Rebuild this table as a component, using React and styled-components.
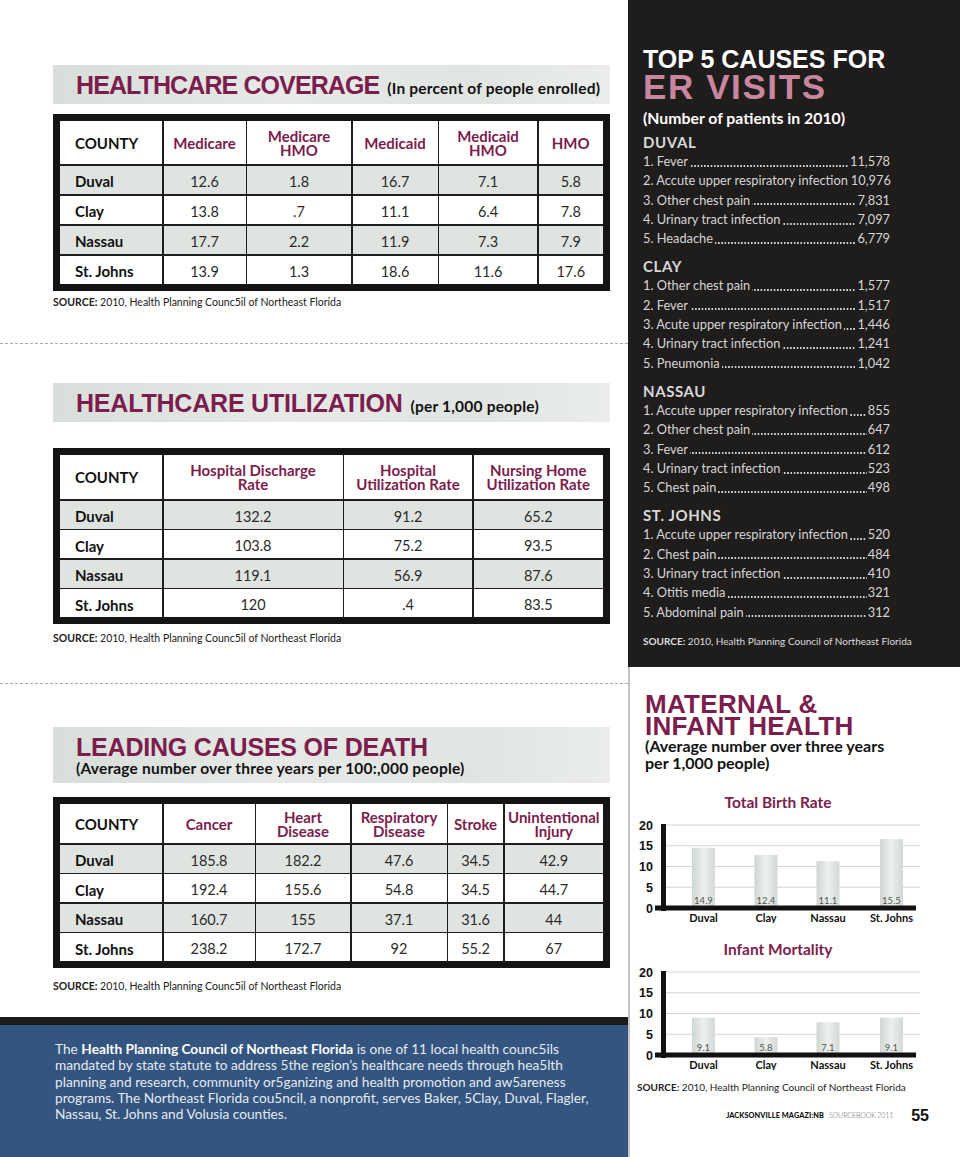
import React from 'react';
import styled, { createGlobalStyle } from 'styled-components';

const MAROON = '#7b1d4d';
const SANS = '"Lato", "Noto Sans", sans-serif';
const HEAD = '"Liberation Sans", Arial, sans-serif';

const GlobalStyle = createGlobalStyle`
  html, body { margin: 0; padding: 0; background: #fff; }
  body { font-family: ${SANS}; }
`;

const Page = styled.div`
  width: 960px;
  height: 1157px;
  display: grid;
  grid-template-columns: 628px 332px;
  overflow: hidden;
`;

/* ---------- left column ---------- */

const LeftCol = styled.div`
  display: flex;
  flex-direction: column;
  background: #fff;
`;

const Block = styled.div`
  padding: 0 18px 0 53px;
  margin-top: ${p => p.$top}px;
`;

const HeadBar = styled.div`
  height: ${p => p.$h}px;
  box-sizing: border-box;
  display: flex;
  flex-direction: ${p => (p.$stacked ? 'column' : 'row')};
  align-items: ${p => (p.$stacked ? 'flex-start' : 'baseline')};
  padding: ${p => (p.$stacked ? '8px 0 0 23px' : '2px 0 0 23px')};
  background: linear-gradient(90deg, #d8deda 0%, #e6e9e6 40%, #e1e5e2 75%, #eaedea 100%);
`;

const HeadTitle = styled.span`
  font-family: ${HEAD};
  font-weight: 700;
  font-size: 25px;
  letter-spacing: ${p => p.$ls ?? -0.2}px;
  color: ${MAROON};
  line-height: ${p => (p.$stacked ? '24px' : '37px')};
`;

const HeadSub = styled.span`
  font-weight: 700;
  font-size: 15.5px;
  letter-spacing: 0.2px;
  line-height: 18px;
  color: #111;
  margin-left: ${p => (p.$stacked ? 0 : 8)}px;
`;

const Frame = styled.div`
  margin-top: ${p => p.$top}px;
  border: 7px solid #141414;
  background: #1e1e1e;
  display: grid;
  grid-template-columns: ${p => p.$cols};
  grid-template-rows: ${p => p.$head}px repeat(4, ${p => p.$row}px);
  gap: 1.5px;
`;

const HeadCell = styled.div`
  background: #fff;
  display: flex;
  align-items: center;
  justify-content: ${p => (p.$first ? 'flex-start' : 'center')};
  padding-left: ${p => (p.$first ? 15 : 0)}px;
  text-align: center;
  font-weight: 700;
  font-size: 15px;
  line-height: 14px;
  color: ${p => (p.$first ? '#111' : MAROON)};
`;

const Cell = styled.div`
  background: ${p => (p.$shade ? '#dfe4e1' : '#fff')};
  display: flex;
  align-items: center;
  justify-content: ${p => (p.$first ? 'flex-start' : 'center')};
  padding: 3px 0 0 ${p => (p.$first ? 15 : 0)}px;
  font-size: ${p => (p.$first ? 15 : 14.5)}px;
  font-weight: ${p => (p.$first ? 700 : 400)};
  color: ${p => (p.$first ? '#111' : '#2b2b2b')};
`;

const Source = styled.div`
  margin-top: ${p => p.$top}px;
  font-size: 10.5px;
  line-height: 12px;
  color: #222;
  b { font-weight: 700; }
`;

const Dashed = styled.div`
  margin-top: ${p => p.$top}px;
  border-top: 1px dashed #a9a9a9;
`;

const InfoPanel = styled.div`
  flex: 1;
  margin-top: 25px;
  border-top: 8px solid #1b1b1b;
  background: #33557f;
  padding: 16px 0 0 55px;
  font-size: 13.7px;
  line-height: 16.3px;
  color: #e4eaf1;
  white-space: nowrap;
  b { color: #fff; font-weight: 700; }
`;

/* ---------- right column ---------- */

const RightCol = styled.div`
  display: flex;
  flex-direction: column;
`;

const ErPanel = styled.div`
  height: 667px;
  box-sizing: border-box;
  background: #1f1c1c;
  padding: 46px 0 0 15px;
  color: #dadada;
`;

const ErTop = styled.div`
  font-family: ${HEAD};
  font-weight: 700;
  font-size: 25px;
  line-height: 26px;
  color: #fff;
`;

const ErBig = styled.div`
  font-family: ${HEAD};
  font-weight: 700;
  font-size: 35px;
  line-height: 30px;
  letter-spacing: 1.6px;
  color: #c8869f;
`;

const ErSub = styled.div`
  margin-top: 7px;
  font-weight: 700;
  font-size: 15.8px;
  line-height: 18px;
  color: #fff;
`;

const GroupHead = styled.div`
  margin-top: ${p => p.$top}px;
  font-weight: 700;
  font-size: 15px;
  line-height: 20px;
  letter-spacing: 0.6px;
  color: #d8d8d8;
`;

const List = styled.div`
  width: 247px;
`;

const Row = styled.div`
  display: flex;
  white-space: nowrap;
  font-size: 12.8px;
  line-height: 19.3px;
  color: #d6d6d6;
`;

const Leader = styled.span`
  flex: 1;
  min-width: 0;
  align-self: flex-end;
  height: 2px;
  margin: 0 1px 4.6px 2px;
  background-image: radial-gradient(circle at 1px 1px, #cfcfcf 0.8px, transparent 1.1px);
  background-size: 3.3px 2px;
  background-repeat: repeat-x;
  background-position: right bottom;
`;

const ErSource = styled.div`
  margin-top: 12px;
  font-size: 10px;
  line-height: 14px;
  color: #dedede;
  b { font-weight: 700; }
`;

const Lower = styled.div`
  flex: 1;
  border-left: 2px solid #c4c4c4;
  background: #fff;
  display: flex;
  flex-direction: column;
`;

const MatTitle = styled.div`
  margin-top: 26px;
  padding-left: 15px;
  font-family: ${HEAD};
  font-weight: 700;
  font-size: 26px;
  line-height: 22px;
  letter-spacing: 0.3px;
  color: ${MAROON};
`;

const MatSub = styled.div`
  padding-left: 15px;
  font-weight: 700;
  font-size: 16px;
  line-height: 17px;
  color: #111;
`;

const ChartTitle = styled.div`
  margin-top: ${p => p.$top}px;
  width: 296px;
  text-align: center;
  font-weight: 700;
  font-size: 15.5px;
  line-height: 18px;
  color: ${MAROON};
`;

const ChartSvg = styled.svg`
  display: block;
  width: 330px;
  height: 112px;
`;

const LowerSource = styled.div`
  margin-top: 10px;
  padding-left: 7px;
  font-size: 10px;
  line-height: 14px;
  color: #222;
  b { font-weight: 700; }
`;

const Footer = styled.div`
  margin-top: 14px;
  display: flex;
  align-items: center;
  justify-content: flex-end;
  padding-right: 31px;
  line-height: 16px;
`;

const Mag = styled.span`
  font-size: 7.3px;
  font-weight: 900;
  letter-spacing: 0.1px;
  color: #111;
`;

const Book = styled.span`
  margin-left: 5px;
  font-size: 7.2px;
  font-weight: 300;
  letter-spacing: -0.2px;
  color: #666;
`;

const PageNum = styled.span`
  margin-left: 18px;
  font-family: ${HEAD};
  font-weight: 700;
  font-size: 16px;
  color: #111;
`;

/* ---------- data ---------- */

const coverage = {
  cols: '102px 82px 104px 85px 98px 1fr',
  head: ['COUNTY', 'Medicare', ['Medicare', 'HMO'], 'Medicaid', ['Medicaid', 'HMO'], 'HMO'],
  rows: [
    ['Duval', '12.6', '1.8', '16.7', '7.1', '5.8'],
    ['Clay', '13.8', '.7', '11.1', '6.4', '7.8'],
    ['Nassau', '17.7', '2.2', '11.9', '7.3', '7.9'],
    ['St. Johns', '13.9', '1.3', '18.6', '11.6', '17.6'],
  ],
};

const utilization = {
  cols: '102px 179px 128px 1fr',
  head: ['COUNTY', ['Hospital Discharge', 'Rate'], ['Hospital', 'Utilization Rate'], ['Nursing Home', 'Utilization Rate']],
  rows: [
    ['Duval', '132.2', '91.2', '65.2'],
    ['Clay', '103.8', '75.2', '93.5'],
    ['Nassau', '119.1', '56.9', '87.6'],
    ['St. Johns', '120', '.4', '83.5'],
  ],
};

const deaths = {
  cols: '102px 91px 94px 95px 55px 1fr',
  head: ['COUNTY', 'Cancer', ['Heart', 'Disease'], ['Respiratory', 'Disease'], 'Stroke', ['Unintentional', 'Injury']],
  rows: [
    ['Duval', '185.8', '182.2', '47.6', '34.5', '42.9'],
    ['Clay', '192.4', '155.6', '54.8', '34.5', '44.7'],
    ['Nassau', '160.7', '155', '37.1', '31.6', '44'],
    ['St. Johns', '238.2', '172.7', '92', '55.2', '67'],
  ],
};

const erGroups = [
  { name: 'DUVAL', top: 5, items: [
    ['1. Fever', '11,578'],
    ['2. Accute upper respiratory infection', '10,976'],
    ['3. Other chest pain', '7,831'],
    ['4. Urinary tract infection', '7,097'],
    ['5. Headache', '6,779'],
  ] },
  { name: 'CLAY', top: 8, items: [
    ['1. Other chest pain', '1,577'],
    ['2. Fever', '1,517'],
    ['3. Acute upper respiratory infection', '1,446'],
    ['4. Urinary tract infection', '1,241'],
    ['5. Pneumonia', '1,042'],
  ] },
  { name: 'NASSAU', top: 8, items: [
    ['1. Accute upper respiratory infection', '855'],
    ['2. Other chest pain', '647'],
    ['3. Fever', '612'],
    ['4. Urinary tract infection', '523'],
    ['5. Chest pain', '498'],
  ] },
  { name: 'ST. JOHNS', top: 8, items: [
    ['1. Accute upper respiratory infection', '520'],
    ['2. Chest pain', '484'],
    ['3. Urinary tract infection', '410'],
    ['4. Otitis media', '321'],
    ['5. Abdominal pain', '312'],
  ] },
];

const birth = [
  { c: 'Duval', v: '14.9', h: 14.5 },
  { c: 'Clay', v: '12.4', h: 12.8 },
  { c: 'Nassau', v: '11.1', h: 11.3 },
  { c: 'St. Johns', v: '15.5', h: 16.6 },
];

const infant = [
  { c: 'Duval', v: '9.1', h: 9.0 },
  { c: 'Clay', v: '5.8', h: 4.3 },
  { c: 'Nassau', v: '7.1', h: 7.9 },
  { c: 'St. Johns', v: '9.1', h: 9.0 },
];

/* ---------- pieces ---------- */

function DataTable({ spec, top, head, row }) {
  return (
    <Frame $cols={spec.cols} $top={top} $head={head} $row={row}>
      {spec.head.map((h, i) => (
        <HeadCell key={'h' + i} $first={i === 0}>
          {Array.isArray(h) ? <span>{h[0]}<br />{h[1]}</span> : h}
        </HeadCell>
      ))}
      {spec.rows.map((r, ri) =>
        r.map((v, ci) => (
          <Cell key={ri + '-' + ci} $first={ci === 0} $shade={ri % 2 === 0}>{v}</Cell>
        ))
      )}
    </Frame>
  );
}

function BarChart({ id, data }) {
  const zero = 97;
  const unit = 4.15;
  const xs = [73.5, 136, 198, 261.5];
  return (
    <ChartSvg viewBox="0 0 330 112">
      <defs>
        <linearGradient id={id} x1="0" x2="1" y1="0" y2="0">
          <stop offset="0" stopColor="#cfd6d2" />
          <stop offset="0.5" stopColor="#eef1ee" />
          <stop offset="1" stopColor="#d3d9d5" />
        </linearGradient>
      </defs>
      {[5, 10, 15, 20].map(t => (
        <line key={t} x1="36" x2="290" y1={zero - t * unit} y2={zero - t * unit} stroke="#d4d4d4" strokeWidth="1" />
      ))}
      {[0, 5, 10, 15, 20].map(t => (
        <text key={t} x="23" y={zero - t * unit + 4.5} textAnchor="end" fontFamily={HEAD} fontWeight="700" fontSize="12.5" fill="#111">{t}</text>
      ))}
      {data.map((d, i) => (
        <g key={d.c}>
          <rect x={xs[i] - 11.5} y={zero - d.h * unit} width="23" height={d.h * unit} fill={`url(#${id})`} />
          <text x={xs[i]} y={zero - 4.5} textAnchor="middle" fontFamily={SANS} fontSize="9.5" fill="#555">{d.v}</text>
          <text x={xs[i]} y={zero + 14} textAnchor="middle" fontFamily={SANS} fontWeight="700" fontSize="11" fill="#111">{d.c}</text>
        </g>
      ))}
      <rect x="31" y="13" width="5" height={zero - 10} fill="#111" />
      <rect x="25" y={zero - 2.5} width="261" height="5" fill="#111" />
    </ChartSvg>
  );
}

export default function App() {
  return (
    <>
      <GlobalStyle />
      <Page>
        <LeftCol>
          <Block $top={65}>
            <HeadBar $h={39}>
              <HeadTitle $ls={-0.9}>HEALTHCARE COVERAGE</HeadTitle>
              <HeadSub>(In percent of people enrolled)</HeadSub>
            </HeadBar>
            <DataTable spec={coverage} top={10} head={43} row={28.5} />
            <Source $top={5}><b>SOURCE:</b> 2010, Health Planning Counc5il of Northeast Florida</Source>
          </Block>
          <Dashed $top={35} />

          <Block $top={39}>
            <HeadBar $h={39}>
              <HeadTitle>HEALTHCARE UTILIZATION</HeadTitle>
              <HeadSub>(per 1,000 people)</HeadSub>
            </HeadBar>
            <DataTable spec={utilization} top={26} head={44} row={28} />
            <Source $top={8}><b>SOURCE:</b> 2010, Health Planning Counc5il of Northeast Florida</Source>
          </Block>
          <Dashed $top={39} />

          <Block $top={43}>
            <HeadBar $h={56} $stacked>
              <HeadTitle $stacked>LEADING CAUSES OF DEATH</HeadTitle>
              <HeadSub $stacked>(Average number over three years per 100:,000 people)</HeadSub>
            </HeadBar>
            <DataTable spec={deaths} top={14} head={39} row={28} />
            <Source $top={12}><b>SOURCE:</b> 2010, Health Planning Counc5il of Northeast Florida</Source>
          </Block>

          <InfoPanel>
            The <b>Health Planning Council of Northeast Florida</b> is one of 11 local health counc5ils<br />
            mandated by state statute to address 5the region’s healthcare needs through hea5lth<br />
            planning and research, community or5ganizing and health promotion and aw5areness<br />
            programs. The Northeast Florida cou5ncil, a nonprofit, serves Baker, 5Clay, Duval, Flagler,<br />
            Nassau, St. Johns and Volusia counties.
          </InfoPanel>
        </LeftCol>

        <RightCol>
          <ErPanel>
            <ErTop>TOP 5 CAUSES FOR</ErTop>
            <ErBig>ER VISITS</ErBig>
            <ErSub>(Number of patients in 2010)</ErSub>
            {erGroups.map(g => (
              <div key={g.name}>
                <GroupHead $top={g.top}>{g.name}</GroupHead>
                <List>
                  {g.items.map(([label, num]) => (
                    <Row key={label}>
                      <span>{label}</span>
                      <Leader />
                      <span>{num}</span>
                    </Row>
                  ))}
                </List>
              </div>
            ))}
            <ErSource><b>SOURCE:</b> 2010, Health Planning Council of Northeast Florida</ErSource>
          </ErPanel>

          <Lower>
            <MatTitle>MATERNAL &amp;<br />INFANT HEALTH</MatTitle>
            <MatSub>(Average number over three years<br />per 1,000 people)</MatSub>
            <ChartTitle $top={22}>Total Birth Rate</ChartTitle>
            <BarChart id="birthGrad" data={birth} />
            <ChartTitle $top={17}>Infant Mortality</ChartTitle>
            <BarChart id="infantGrad" data={infant} />
            <LowerSource><b>SOURCE:</b> 2010, Health Planning Council of Northeast Florida</LowerSource>
            <Footer>
              <Mag>JACKSONVILLE MAGAZI:NB</Mag>
              <Book>SOURCEBOOK 2011</Book>
              <PageNum>55</PageNum>
            </Footer>
          </Lower>
        </RightCol>
      </Page>
    </>
  );
}
